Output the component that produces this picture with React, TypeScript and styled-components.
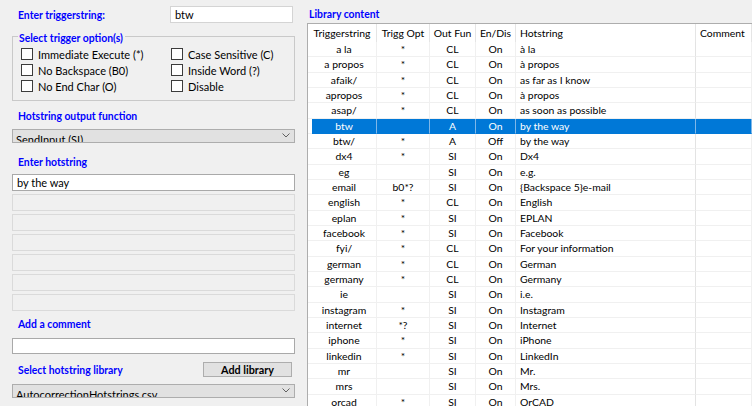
import React from 'react';
import styled, { createGlobalStyle } from 'styled-components';

const GlobalStyle = createGlobalStyle`
  html, body { margin: 0; padding: 0; width: 752px; height: 406px; overflow: hidden; background: #f0f0f0; }
  body { font-family: Lato, "Noto Sans", sans-serif; font-size: 11px; color: #000; }
  * { box-sizing: border-box; }
`;

const Window = styled.div`
  display: flex;
  width: 752px;
  height: 406px;
  overflow: hidden;
  background: #f0f0f0;
`;

const LeftPanel = styled.div`
  width: 307px;
  flex: none;
  padding: 6px 12px 0 12px;
  display: flex;
  flex-direction: column;
`;

const Label = styled.div<{ $mt?: number }>`
  color: #0000ff;
  font-weight: 700;
  font-size: 10.4px;
  line-height: 14px;
  height: 14px;
  margin: ${(p) => p.$mt ?? 0}px 0 0 6px;
  white-space: nowrap;
`;

const InlineRow = styled.div<{ $mt?: number; $h: number }>`
  display: flex;
  align-items: center;
  justify-content: space-between;
  height: ${(p) => p.$h}px;
  margin-top: ${(p) => p.$mt ?? 0}px;
  & > ${Label} { margin-top: 0; }
`;

const TextBox = styled.div<{ $width?: number; $mt?: number; $h?: number; $border?: string }>`
  width: ${(p) => (p.$width ? `${p.$width}px` : '100%')};
  height: ${(p) => p.$h ?? 17}px;
  margin-top: ${(p) => p.$mt ?? 0}px;
  margin-right: ${(p) => (p.$width ? 2 : 0)}px;
  background: #fff;
  border: 1px solid ${(p) => p.$border ?? '#a9a9a9'};
  padding: 0 4px;
  font-size: 11px;
  line-height: 15px;
  color: #000;
  white-space: nowrap;
  overflow: hidden;
`;

const DisabledBox = styled.div`
  height: 17px;
  background: #f0f0f0;
  border: 1px solid #dadada;
`;

const Stack = styled.div<{ $mt: number }>`
  display: flex;
  flex-direction: column;
  gap: 3px;
  margin-top: ${(p) => p.$mt}px;
`;

const GroupBox = styled.div`
  margin-top: 13px;
  border: 1px solid #c9c9c9;
  padding: 0 8px 6px 8px;
  display: flex;
  flex-direction: column;
`;

const Legend = styled.div`
  align-self: flex-start;
  margin: -6px 0 0 -3px;
  padding: 0 2px 0 1px;
  background: #f0f0f0;
  color: #0000ff;
  font-weight: 700;
  font-size: 10.4px;
  line-height: 14px;
  white-space: nowrap;
`;

const CheckGrid = styled.div`
  margin-top: 1px;
  display: grid;
  grid-template-columns: 150px 1fr;
  grid-auto-rows: 16px;
`;

const CheckItem = styled.label`
  display: flex;
  align-items: center;
  gap: 5px;
  font-size: 11px;
  color: #000;
  white-space: nowrap;
`;

const CheckBox = styled.span`
  width: 12px;
  height: 12px;
  flex: none;
  background: #fff;
  border: 1px solid #3c3c3c;
`;

const Select = styled.div<{ $mt: number }>`
  position: relative;
  height: 14px;
  margin-top: ${(p) => p.$mt}px;
  background: #e1e1e1;
  border: 1px solid #adadad;
  overflow: hidden;
  padding: 3px 0 0 3px;
  font-size: 11px;
  line-height: 14px;
  color: #000;
  white-space: nowrap;
`;

const Chevron = styled.svg`
  position: absolute;
  right: 4px;
  top: 3px;
`;

const Button = styled.div`
  width: 89px;
  height: 15px;
  margin-right: 3px;
  background: #e1e1e1;
  border: 1px solid #adadad;
  display: flex;
  align-items: center;
  justify-content: center;
  font-weight: 700;
  font-size: 10.8px;
  color: #000;
`;

const RightPanel = styled.div`
  flex: 1;
  display: flex;
  flex-direction: column;
  min-width: 0;
`;

const RightLabel = styled(Label)`
  margin: 7px 0 0 2px;
`;

const Table = styled.div`
  margin-top: 2px;
  flex: 1;
  background: #fff;
  border-top: 1px solid #adadad;
  border-left: 1px solid #adadad;
  overflow: hidden;
  font-size: 10.4px;
`;

const HeaderRow = styled.div`
  display: grid;
  grid-template-columns: 69px 53px 46px 40px 180px 1fr;
  height: 18px;
`;

const HeaderCell = styled.div<{ $left?: boolean }>`
  border-right: 1px solid #e5e5e5;
  text-align: ${(p) => (p.$left ? 'left' : 'center')};
  padding-left: ${(p) => (p.$left ? 4 : 0)}px;
  line-height: 18px;
  color: #000;
  white-space: nowrap;
  overflow: hidden;
`;

const Row = styled.div`
  display: grid;
  grid-template-columns: 4px 65px 53px 46px 40px 180px 1fr;
  height: 15.333px;
`;

const Spacer = styled.div`
  border-bottom: 1px solid #f0f0f0;
`;

const Cell = styled.div<{ $left?: boolean; $sel?: boolean; $strong?: boolean }>`
  background: ${(p) => (p.$sel ? '#0078d7' : '#fff')};
  color: ${(p) => (p.$sel ? '#fff' : '#000')};
  border-right: 1px solid ${(p) => (p.$sel ? '#7fb7e8' : p.$strong ? '#e3e3e3' : '#f0f0f0')};
  border-bottom: 1px solid ${(p) => (p.$sel ? '#0078d7' : '#f0f0f0')};
  text-align: ${(p) => (p.$left ? 'left' : 'center')};
  padding-left: ${(p) => (p.$left ? 4 : 0)}px;
  line-height: 14px;
  white-space: nowrap;
  overflow: hidden;
`;

type Entry = [string, string, string, string, string];

const entries: Entry[] = [
  ['a la', '*', 'CL', 'On', 'à la'],
  ['a propos', '*', 'CL', 'On', 'à propos'],
  ['afaik/', '*', 'CL', 'On', 'as far as I know'],
  ['apropos', '*', 'CL', 'On', 'à propos'],
  ['asap/', '*', 'CL', 'On', 'as soon as possible'],
  ['btw', '', 'A', 'On', 'by the way'],
  ['btw/', '*', 'A', 'Off', 'by the way'],
  ['dx4', '*', 'SI', 'On', 'Dx4'],
  ['eg', '', 'SI', 'On', 'e.g.'],
  ['email', 'b0*?', 'SI', 'On', '{Backspace 5}e-mail'],
  ['english', '*', 'CL', 'On', 'English'],
  ['eplan', '*', 'SI', 'On', 'EPLAN'],
  ['facebook', '*', 'SI', 'On', 'Facebook'],
  ['fyi/', '*', 'CL', 'On', 'For your information'],
  ['german', '*', 'CL', 'On', 'German'],
  ['germany', '*', 'CL', 'On', 'Germany'],
  ['ie', '', 'SI', 'On', 'i.e.'],
  ['instagram', '*', 'SI', 'On', 'Instagram'],
  ['internet', '*?', 'SI', 'On', 'Internet'],
  ['iphone', '*', 'SI', 'On', 'iPhone'],
  ['linkedin', '*', 'SI', 'On', 'LinkedIn'],
  ['mr', '', 'SI', 'On', 'Mr.'],
  ['mrs', '', 'SI', 'On', 'Mrs.'],
  ['orcad', '*', 'SI', 'On', 'OrCAD'],
];

const SELECTED = 5;

const ChevronIcon = () => (
  <Chevron width="8" height="5" viewBox="0 0 8 5">
    <polyline points="0.5,0.5 4,4 7.5,0.5" fill="none" stroke="#606060" strokeWidth="1" />
  </Chevron>
);

export default function App() {
  return (
    <Window>
      <GlobalStyle />
      <LeftPanel>
        <InlineRow $h={17}>
          <Label>Enter triggerstring:</Label>
          <TextBox $width={123} $border="#d4d4d4">btw</TextBox>
        </InlineRow>

        <GroupBox>
          <Legend>Select trigger option(s)</Legend>
          <CheckGrid>
            <CheckItem><CheckBox />Immediate Execute (*)</CheckItem>
            <CheckItem><CheckBox />Case Sensitive (C)</CheckItem>
            <CheckItem><CheckBox />No Backspace (B0)</CheckItem>
            <CheckItem><CheckBox />Inside Word (?)</CheckItem>
            <CheckItem><CheckBox />No End Char (O)</CheckItem>
            <CheckItem><CheckBox />Disable</CheckItem>
          </CheckGrid>
        </GroupBox>

        <Label $mt={8}>Hotstring output function</Label>
        <Select $mt={6}>
          SendInput (SI)
          <ChevronIcon />
        </Select>

        <Label $mt={12}>Enter hotstring</Label>
        <Stack $mt={5}>
          <TextBox>by the way</TextBox>
          {Array.from({ length: 6 }).map((_, i) => (
            <DisabledBox key={i} />
          ))}
        </Stack>

        <Label $mt={6}>Add a comment</Label>
        <TextBox $mt={7} $h={16} />

        <InlineRow $mt={8} $h={15}>
          <Label>Select hotstring library</Label>
          <Button>Add library</Button>
        </InlineRow>
        <Select $mt={7}>
          AutocorrectionHotstrings.csv
          <ChevronIcon />
        </Select>
      </LeftPanel>

      <RightPanel>
        <RightLabel>Library content</RightLabel>
        <Table>
          <HeaderRow>
            <HeaderCell>Triggerstring</HeaderCell>
            <HeaderCell>Trigg Opt</HeaderCell>
            <HeaderCell>Out Fun</HeaderCell>
            <HeaderCell>En/Dis</HeaderCell>
            <HeaderCell $left>Hotstring</HeaderCell>
            <HeaderCell $left>Comment</HeaderCell>
          </HeaderRow>
          {entries.map((e, i) => {
            const sel = i === SELECTED;
            return (
              <Row key={e[0]}>
                <Spacer />
                <Cell $sel={sel}>{e[0]}</Cell>
                <Cell $sel={sel}>{e[1]}</Cell>
                <Cell $sel={sel}>{e[2]}</Cell>
                <Cell $sel={sel}>{e[3]}</Cell>
                <Cell $sel={sel} $left $strong>{e[4]}</Cell>
                <Cell $sel={sel} $left />
              </Row>
            );
          })}
        </Table>
      </RightPanel>
    </Window>
  );
}
